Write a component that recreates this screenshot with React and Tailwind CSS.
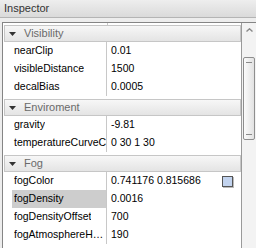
import React from "react";

const groups = [
    {
        name: "Visibility",
        rows: [
            { label: "nearClip", value: "0.01" },
            { label: "visibleDistance", value: "1500" },
            { label: "decalBias", value: "0.0005" },
        ],
    },
    {
        name: "Enviroment",
        rows: [
            { label: "gravity", value: "-9.81" },
            { label: "temperatureCurveC", value: "0 30 1 30", clip: true },
        ],
    },
    {
        name: "Fog",
        rows: [
            { label: "fogColor", value: "0.741176 0.815686", swatch: true },
            { label: "fogDensity", value: "0.0016", selected: true },
            { label: "fogDensityOffset", value: "700" },
            { label: "fogAtmosphereHeight", value: "190" },
        ],
    },
];

function Row({ row }) {
    return (
        <div className="flex h-[18px] items-center">
            <div className="w-[8px] shrink-0" />
            <div
                className={`flex h-full w-[94px] shrink-0 items-center overflow-hidden pl-[2px] ${
                    row.selected ? "bg-[#cdcdcd]" : ""
                }`}
            >
                <span className={row.clip ? "whitespace-nowrap" : "truncate whitespace-nowrap"}>
                    {row.label}
                </span>
            </div>
            <div className="h-full w-px shrink-0 bg-[#c8c8c8]" />
            <div className="flex h-full flex-1 items-center pl-[4px] pr-[8px]">
                <span className="whitespace-nowrap">{row.value}</span>
                {row.swatch && (
                    <div className="ml-auto h-[11px] w-[11px] border border-[#555] bg-[#c2d3ee] shadow-[1px_1px_0_#bbb]" />
                )}
            </div>
        </div>
    );
}

function Group({ group }) {
    return (
        <div className="pb-[3px]">
            <div className="flex h-[17px] items-center border border-[#c6c6c6] bg-gradient-to-b from-[#f7f7f7] to-[#e4e4e4] text-[11px] text-[#6a6a6a]">
                <svg width="7" height="4" viewBox="0 0 7 4" className="ml-[4px] mr-[8px]">
                    <path d="M0 0 H7 L3.5 4 Z" fill="#333" />
                </svg>
                {group.name}
            </div>
            {group.rows.map((row) => (
                <Row key={row.label} row={row} />
            ))}
        </div>
    );
}

export default function App() {
    return (
        <div
            className="h-[248px] w-[256px] overflow-hidden bg-[#ededed] text-[10.5px] text-black"
            style={{ fontFamily: '"Liberation Sans", Arial, sans-serif' }}
        >
            {/* Title */}
            <div className="flex h-[18px] items-center border-b border-[#b4b4b4] bg-gradient-to-b from-[#eeeeee] to-[#dadada] pl-[4px] text-[11px] text-[#333]">
                Inspector
            </div>

            {/* Property grid */}
            <div className="pl-[2px] pt-[4px]">
                <div className="flex h-[240px] border-l border-t border-[#858585] bg-white">
                    <div className="flex-1 pl-px">
                        <div className="flex h-[2px]">
                            <div className="w-[103px]" />
                            <div className="w-px bg-[#c8c8c8]" />
                        </div>
                        {groups.map((g) => (
                            <Group key={g.name} group={g} />
                        ))}
                    </div>

                    {/* Scrollbar */}
                    <div className="flex w-[15px] shrink-0 flex-col items-center border-l border-[#9a9a9a] bg-[#f3f3f3]">
                        <svg width="7" height="4" viewBox="0 0 7 4" className="mt-[5px]">
                            <path d="M0.5 3.5 L3.5 0.8 L6.5 3.5" fill="none" stroke="#8a8a8a" strokeWidth="1.4" />
                        </svg>
                        <div className="mt-[25px] flex h-[83px] w-[12px] flex-col justify-between rounded-[2px] border border-[#8e8e8e] bg-gradient-to-r from-[#fbfbfb] to-[#e2e2e2] px-[2px] py-[4px]">
                            <div className="h-px bg-[#8a8a8a]" />
                            <div className="h-px bg-[#8a8a8a]" />
                        </div>
                    </div>
                </div>
            </div>
        </div>
    );
}
